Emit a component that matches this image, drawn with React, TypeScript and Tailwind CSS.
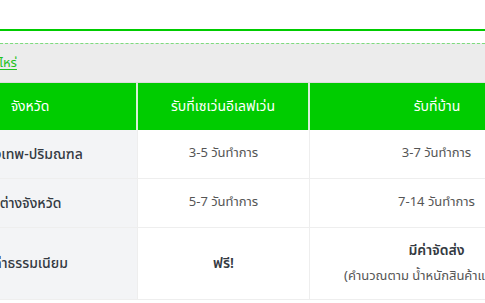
const font = { fontFamily: '"Noto Sans Thai", "Noto Sans", "Liberation Sans", sans-serif' };

function Cell({ children, first }: { children: React.ReactNode; first?: boolean }) {
  return (
    <div
      className={
        first
          ? "w-[214px] shrink-0 flex items-center justify-center bg-[#f3f4f6] border-r border-[#eeeeee] font-medium text-[#343a42] text-[14px]"
          : "flex items-center justify-center border-r border-[#eeeeee] text-[#555555] text-[13px]"
      }
    >
      {children}
    </div>
  );
}

export default function App() {
  return (
    <div className="w-[485px] h-[303px] overflow-hidden bg-white" style={font}>
      <div className="h-[29px]" />
      <div className="h-[2px] bg-[#00cc00]" />
      <div className="h-[12px]" />
      <div className="h-[39px] bg-[#ececec] border-t border-dashed border-[#7ddc7d] flex items-center">
        <a href="#" className="text-[13px] text-[#1fc21f] underline underline-offset-2 leading-none -ml-[1px]">
          ไหร่
        </a>
      </div>

      <div className="w-[640px] -ml-[76px] border-t border-[#dddddd]">
        <div className="flex h-[47px] bg-[#00cc00] text-white text-[14px]">
          <div className="w-[214px] shrink-0 flex items-center justify-center border-r-2 border-[#d8efd8]">จังหวัด</div>
          <div className="w-[172px] shrink-0 flex items-center justify-center border-r-2 border-[#d8efd8]">รับที่เซเว่นอีเลฟเว่น</div>
          <div className="flex-1 flex items-center justify-center">รับที่บ้าน</div>
        </div>

        <div className="grid grid-cols-[214px_172px_254px] h-[49px] border-b border-[#eeeeee]">
          <Cell first>กรุงเทพ-ปริมณฑล</Cell>
          <Cell>3-5 วันทำการ</Cell>
          <Cell>3-7 วันทำการ</Cell>
        </div>
        <div className="grid grid-cols-[214px_172px_254px] h-[49px] border-b border-[#eeeeee]">
          <Cell first>ต่างจังหวัด</Cell>
          <Cell>5-7 วันทำการ</Cell>
          <Cell>7-14 วันทำการ</Cell>
        </div>
        <div className="grid grid-cols-[214px_172px_254px] h-[72px] border-b border-[#eeeeee]">
          <Cell first>ค่าธรรมเนียม</Cell>
          <Cell>
            <span className="font-semibold text-[14px] text-[#343a42]">ฟรี!</span>
          </Cell>
          <Cell>
            <div className="flex flex-col items-center gap-[6px]">
              <span className="font-semibold text-[14px] text-[#343a42]">มีค่าจัดส่ง</span>
              <span className="text-[13px]">(คำนวณตาม น้ำหนักสินค้าและขนาด)</span>
            </div>
          </Cell>
        </div>
      </div>
    </div>
  );
}
